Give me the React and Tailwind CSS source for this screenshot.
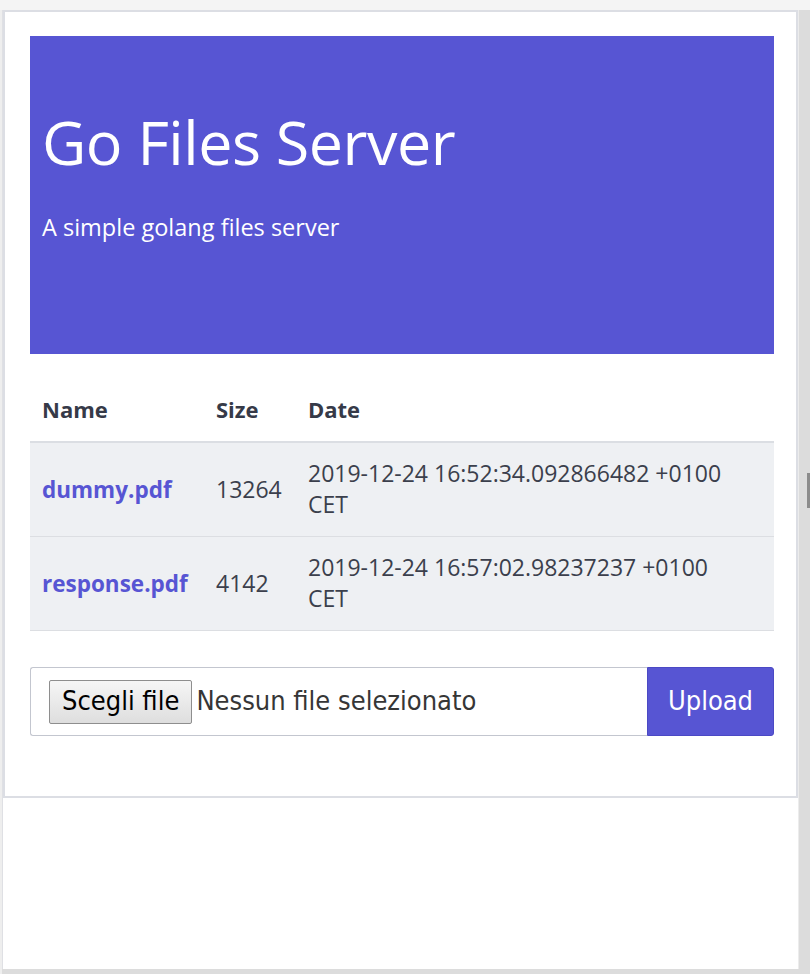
import React from 'react';

const files = [
  { name: 'dummy.pdf', size: '13264', date: '2019-12-24 16:52:34.092866482 +0100', zone: 'CET' },
  { name: 'response.pdf', size: '4142', date: '2019-12-24 16:57:02.98237237 +0100', zone: 'CET' },
];

const sans = "font-['Open_Sans','Noto_Sans',sans-serif]";
const narrow = "font-['Liberation_Sans_Narrow','DejaVu_Sans_Condensed','Open_Sans',sans-serif]";

export default function App() {
  return (
    <div className={`w-[810px] h-[974px] bg-[#dcdcdc] flex flex-col ${sans}`}>
      <div className="h-[10px] bg-[#f4f4f4] shrink-0" />
      <div className="flex flex-1 min-h-0">
        <div className="w-[2px] bg-[#eeeeee]" />
        {/* page */}
        <div className="w-[797px] h-[959px] bg-white border-l border-[#dfe0e4] border-r border-r-[#ececec] flex flex-col">
          <div className="border-2 border-[#dcdee4] pl-[25px] pr-[22px] pt-[24px] pb-[60px] bg-white">
            {/* hero */}
            <section className="bg-[#5755d3] h-[318px] px-[12px] pt-[72px]">
              <h1 className="text-white text-[61px] leading-[1.125] font-normal tracking-[-0.5px]">Go Files Server</h1>
              <p className="text-white text-[23.5px] leading-[1.25] mt-[36px]">A simple golang files server</p>
            </section>

            {/* table */}
            <div className="mt-[30px] text-[#3b3f4c] text-[23px]">
              <div className="grid grid-cols-[174px_92px_1fr] border-b-2 border-[#dbdee3] font-bold text-[#363a48] text-[22px]">
                <div className="px-[12px] pt-[9px] pb-[15px] leading-[33px]">Name</div>
                <div className="px-[12px] pt-[9px] pb-[15px] leading-[33px]">Size</div>
                <div className="px-[12px] pt-[9px] pb-[15px] leading-[33px]">Date</div>
              </div>
              {files.map((f) => (
                <div
                  key={f.name}
                  className="grid grid-cols-[174px_92px_1fr] bg-[#eef0f3] border-b border-[#dcdee2] items-center"
                >
                  <a href="#" className="px-[12px] py-[18px] font-bold text-[22.5px] text-[#5755d3] leading-[33px]">
                    {f.name}
                  </a>
                  <div className="px-[12px] py-[18px] leading-[33px]">{f.size}</div>
                  <div className="px-[12px] pt-[15px] pb-[16px] leading-[31px]">
                    <div>{f.date}</div>
                    <div>{f.zone}</div>
                  </div>
                </div>
              ))}
            </div>

            {/* upload form */}
            <form className="mt-[36px] flex h-[69px]" onSubmit={(e) => e.preventDefault()}>
              <label className="flex-1 flex items-center border border-[#c3c6cf] border-r-0 rounded-l-[3px] pl-[18px] gap-[4px]">
                <span
                  className={`h-[44px] px-[12px] flex items-center rounded-[2px] border border-[#8e8e8e] bg-gradient-to-b from-[#f6f6f6] to-[#dedede] text-black text-[27px] ${narrow}`}
                >
                  Scegli file
                </span>
                <span className={`text-[#363636] text-[27px] ${narrow}`}>Nessun file selezionato</span>
              </label>
              <button
                type="submit"
                className={`w-[127px] bg-[#5755d3] text-white text-[27px] rounded-r-[3px] border border-[#4b49c4] ${narrow}`}
              >
                Upload
              </button>
            </form>
          </div>
          <div className="flex-1" />
        </div>
        {/* scrollbar */}
        <div className="flex-1 relative bg-[#dcdcdc]">
          <div className="absolute right-0 top-[463px] w-[3px] h-[35px] bg-[#8c8c8c]" />
        </div>
      </div>
    </div>
  );
}
